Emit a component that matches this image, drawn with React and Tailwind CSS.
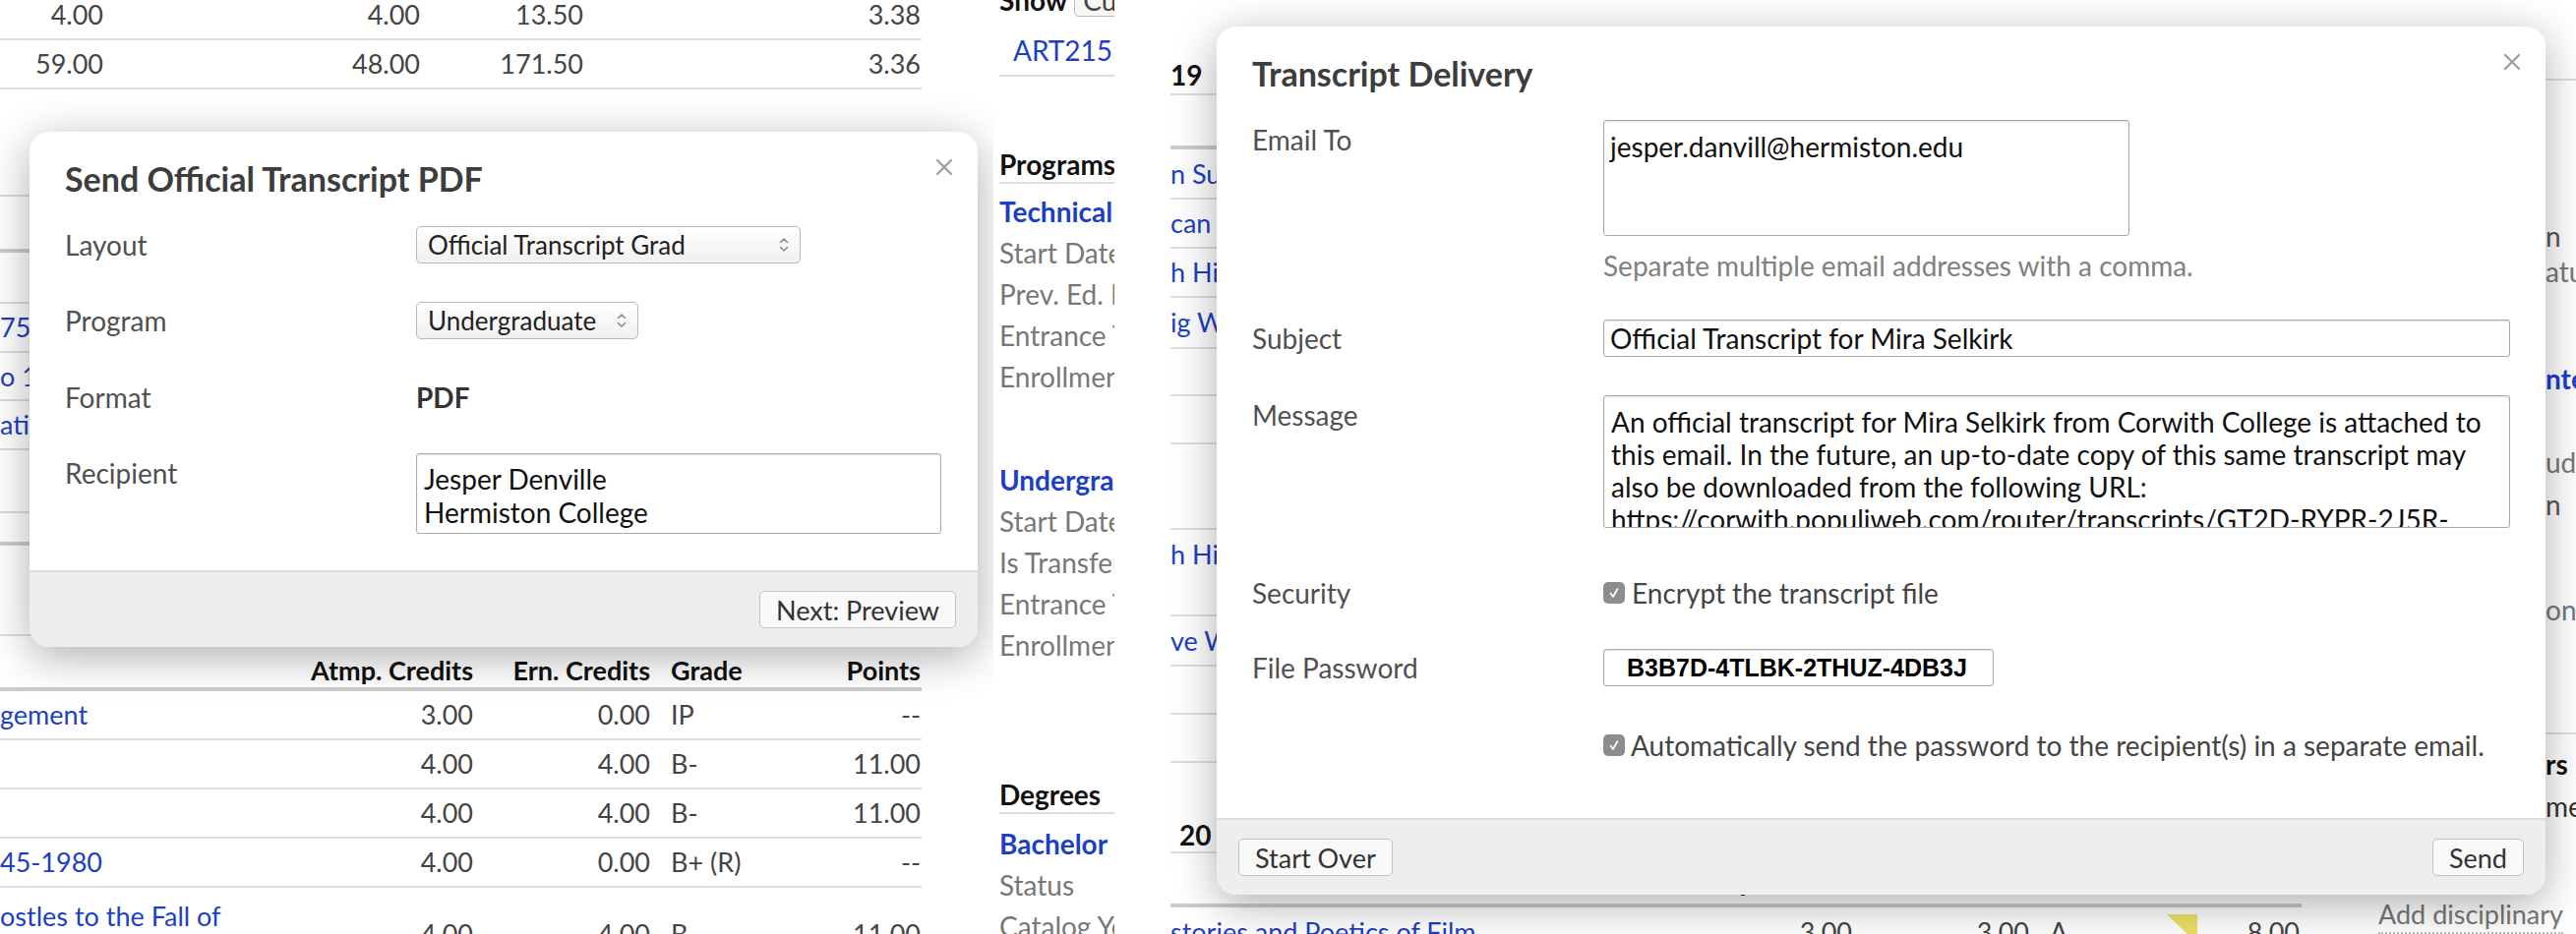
import React from "react";

const LINK = "text-[#1c3fc4]";

function Chevrons() {
  return (
    <svg width="12" height="20" viewBox="0 0 12 20" fill="none" stroke="#8a8a8a" strokeWidth="1.5" strokeLinecap="round" strokeLinejoin="round">
      <path d="M2.5 7.5 6 4l3.5 3.5" />
      <path d="M2.5 12.5 6 16l3.5-3.5" />
    </svg>
  );
}

function Check() {
  return (
    <span className="flex h-[22px] w-[22px] shrink-0 items-center justify-center rounded-[5px] bg-[#8d8d8d]">
      <svg width="14" height="14" viewBox="0 0 14 14" fill="none" stroke="white" strokeWidth="1.6" strokeLinecap="round" strokeLinejoin="round">
        <path d="M3.5 7.5 6 11 10.5 3" />
      </svg>
    </span>
  );
}

function CloseX() {
  return (
    <svg width="20" height="20" viewBox="0 0 20 20" stroke="#a0a0a0" strokeWidth="2.4" strokeLinecap="round">
      <path d="M3 3l14 14M17 3 3 17" />
    </svg>
  );
}

function Select({ value, className }) {
  return (
    <div className={`flex h-[38px] items-center justify-between rounded-[5px] border border-[#b8b8b8] bg-gradient-to-b from-white to-[#f0f0f0] pl-[11px] pr-[10px] text-[26px] text-[#222] ${className}`}>
      <span className="leading-none">{value}</span>
      <Chevrons />
    </div>
  );
}

function Button({ children }) {
  return (
    <button className="h-[38px] rounded-[5px] border border-[#c2c2c2] bg-[#f9f9f9] px-[16px] text-[27px] leading-none text-[#333]">
      {children}
    </button>
  );
}

function Row({ label, children, className = "", center = false }) {
  return (
    <div className={`flex ${center ? "items-center" : "items-start"} ${className}`}>
      <div className="w-[357px] shrink-0 text-[28px] leading-[40px] text-[#505050]">{label}</div>
      <div className="flex-1">{children}</div>
    </div>
  );
}

function Modal({ title, className, footer, children }) {
  return (
    <div className={`absolute flex flex-col overflow-hidden rounded-[20px] bg-white shadow-[0_10px_45px_rgba(0,0,0,0.32)] ${className}`}>
      <div className="relative h-[95px] shrink-0 px-[36px] pt-[29px]">
        <h2 className="text-[34px] font-bold leading-[38px] text-[#3d3d3d]">{title}</h2>
        <span className="absolute right-[24px] top-[26px]">
          <CloseX />
        </span>
      </div>
      <div className="flex-1 px-[36px]">{children}</div>
      <div className="flex h-[78px] shrink-0 items-center border-t-2 border-[#dcdcdc] bg-[#eeeeee] px-[22px]">{footer}</div>
    </div>
  );
}

const inputBox = "rounded-[3px] border border-[#aaa] bg-white shadow-[inset_0_1px_2px_rgba(0,0,0,0.12)]";
const numCell = "flex justify-end whitespace-nowrap";

function SummaryRow({ cells, className = "" }) {
  return (
    <div className={`grid h-[50px] w-[937px] grid-cols-[105px_322px_166px_343px] items-center border-b-2 border-[#ddd] text-[#444] ${className}`}>
      {cells.map((c, i) => (
        <span key={i} className={numCell}>{c}</span>
      ))}
    </div>
  );
}

function CourseRow({ name, atmp, ern, grade, points }) {
  return (
    <div className="grid h-[50px] w-[937px] grid-cols-[330px_151px_180px_139px_136px] items-center border-b-2 border-[#ddd] text-[#444]">
      <span className={`${LINK} whitespace-nowrap`}>{name}</span>
      <span className={numCell}>{atmp}</span>
      <span className={numCell}>{ern}</span>
      <span className="whitespace-nowrap pl-[21px]">{grade}</span>
      <span className={numCell}>{points}</span>
    </div>
  );
}

function LeftSection() {
  return (
    <div className="relative h-[950px] w-[1010px] shrink-0 overflow-hidden text-[27px]">
      <div className="leading-[30px]">
        <SummaryRow className="-mt-[9px]" cells={["4.00", "4.00", "13.50", "3.38"]} />
        <SummaryRow cells={["59.00", "48.00", "171.50", "3.36"]} />
        <div className="h-[109px] w-[937px] border-b-2 border-[#ddd]" />
        <div className="h-[57px] w-[937px] border-b-4 border-[#ccc]" />
        <div className="h-[52px] w-[937px] border-b-2 border-[#ddd]" />
        <div className={`flex h-[50px] w-[937px] items-center border-b-2 border-[#ddd] ${LINK}`}>75: Intro</div>
        <div className={`flex h-[49px] w-[937px] items-center border-b-2 border-[#ddd] ${LINK}`}>o 1900</div>
        <div className={`flex h-[50px] w-[937px] items-center border-b-2 border-[#ddd] ${LINK}`}>ation</div>
        <div className="h-[64px] w-[937px] border-b-2 border-[#ddd]" />
        <div className="h-[33px] w-[937px] border-b-4 border-[#ccc]" />
        <div className="h-[92px] w-[937px] border-b-2 border-[#ddd]" />
        <div className="grid h-[56px] w-[937px] grid-cols-[330px_151px_180px_139px_136px] items-end border-b-4 border-[#ccc] pb-[2px] font-bold text-[#111]">
          <span />
          <span className={numCell}>Atmp. Credits</span>
          <span className={numCell}>Ern. Credits</span>
          <span className="pl-[21px]">Grade</span>
          <span className={numCell}>Points</span>
        </div>
        <CourseRow name="gement" atmp="3.00" ern="0.00" grade="IP" points="--" />
        <CourseRow name="" atmp="4.00" ern="4.00" grade="B-" points="11.00" />
        <CourseRow name="" atmp="4.00" ern="4.00" grade="B-" points="11.00" />
        <CourseRow name="45-1980" atmp="4.00" ern="0.00" grade="B+ (R)" points="--" />
        <div className="grid w-[937px] grid-cols-[330px_151px_180px_139px_136px] pt-[12px] text-[#444]">
          <span className={`${LINK} whitespace-nowrap leading-[34px]`}>ostles to the Fall of<br />Rome</span>
          <span className={`${numCell} pt-[20px]`}>4.00</span>
          <span className={`${numCell} pt-[20px]`}>4.00</span>
          <span className="pl-[21px] pt-[20px]">B</span>
          <span className={`${numCell} pt-[20px]`}>11.00</span>
        </div>
      </div>

      <Modal
        title="Send Official Transcript PDF"
        className="left-[30px] top-[134px] h-[524px] w-[964px]"
        footer={
          <div className="flex w-full justify-end">
            <Button>Next: Preview</Button>
          </div>
        }
      >
        <div className="flex flex-col text-[28px]">
          <Row label="Layout" center>
            <Select value="Official Transcript Grad" className="w-[391px]" />
          </Row>
          <Row label="Program" center className="mt-[37px]">
            <Select value="Undergraduate" className="w-[226px]" />
          </Row>
          <Row label="Format" center className="mt-[38px]">
            <div className="flex h-[38px] items-center font-bold text-[#333]">PDF</div>
          </Row>
          <Row label="Recipient" className="mt-[37px]">
            <div className={`h-[82px] w-[534px] pl-[7px] pt-[8px] leading-[34px] text-[#111] ${inputBox}`}>
              <div>Jesper Denville</div>
              <div>Hermiston College</div>
            </div>
          </Row>
        </div>
      </Modal>
    </div>
  );
}

function MidSection() {
  return (
    <div className="h-[950px] w-[123px] shrink-0 overflow-hidden pl-[6px]">
      <div className="w-[117px] whitespace-nowrap">
        <div className="-mt-[20px] flex h-[40px] items-center gap-[7px]">
          <span className="font-bold text-[#111]">Show</span>
          <span className="flex h-[34px] items-center rounded-[5px] border border-[#bbb] bg-[#f6f6f6] px-[8px] text-[#444]">Current</span>
        </div>
        <div className={`flex h-[58px] items-center border-b-2 border-[#ddd] pl-[14px] pt-[6px] ${LINK}`}>ART215: Studio</div>
        <div className="mt-[71px] flex h-[38px] items-center border-b-2 border-[#ddd] font-bold text-[#111]">Programs</div>
        <div className={`mt-[7px] flex h-[42px] items-center font-bold ${LINK}`}>Technical Arts</div>
        <div className="flex h-[42px] items-center text-[#777]">Start Date</div>
        <div className="flex h-[42px] items-center text-[#777]">Prev. Ed. Level</div>
        <div className="flex h-[42px] items-center text-[#777]">Entrance Term</div>
        <div className="flex h-[42px] items-center text-[#777]">Enrollment</div>
        <div className={`mt-[63px] flex h-[42px] items-center font-bold ${LINK}`}>Undergraduate</div>
        <div className="flex h-[42px] items-center text-[#777]">Start Date</div>
        <div className="flex h-[42px] items-center text-[#777]">Is Transfer</div>
        <div className="flex h-[42px] items-center text-[#777]">Entrance Term</div>
        <div className="flex h-[42px] items-center text-[#777]">Enrollment</div>
        <div className="mt-[113px] flex h-[38px] items-center border-b-2 border-[#ddd] font-bold text-[#111]">Degrees</div>
        <div className={`mt-[9px] flex h-[42px] items-center font-bold ${LINK}`}>Bachelor of Arts</div>
        <div className="flex h-[42px] items-center text-[#777]">Status</div>
        <div className="flex h-[42px] items-center text-[#777]">Catalog Year</div>
      </div>
    </div>
  );
}

function TermRow({ text, h = "h-[50px]" }) {
  return (
    <div className={`flex ${h} items-center border-b-2 border-[#ddd] ${LINK}`}>{text}</div>
  );
}

function RightSection() {
  return (
    <div className="relative h-[950px] flex-1 overflow-hidden">
      <div className="flex h-full items-start">
        <div className="w-[57px] shrink-0" />
        {/* course table behind the modal */}
        <div className="w-[1150px] shrink-0 overflow-hidden whitespace-nowrap text-[27px]">
          <div className="flex h-[97px] items-end border-b-2 border-[#ddd] pb-[4px] text-[28px] font-bold leading-[30px] text-[#111]">19</div>
          <div className="h-[55px] border-b-4 border-[#ccc]" />
          <TermRow text="n Summer Session" h="h-[51px]" />
          <TermRow text="can Literature" />
          <TermRow text="h History" />
          <TermRow text="ig Workshop" h="h-[52px]" />
          <TermRow text="" h="h-[48px]" />
          <TermRow text="" h="h-[49px]" />
          <TermRow text="" h="h-[87px]" />
          <div className={`h-[88px] border-b-2 border-[#ddd] pt-[8px] leading-[34px] ${LINK}`}>h History II</div>
          <TermRow text="ve Writing" h="h-[51px]" />
          <TermRow text="" h="h-[49px]" />
          <TermRow text="" h="h-[49px]" />
          <div className="flex h-[92px] items-end border-b-2 border-[#ddd] pb-[2px] pl-[9px] text-[28px] font-bold leading-[30px] text-[#111]">20</div>
          <div className="grid h-[55px] grid-cols-[542px_151px_180px_139px_136px] items-end border-b-4 border-[#ccc] pb-[7px] font-bold leading-[30px] text-[#111]">
            <span />
            <span className={numCell}>Atmp. Credits</span>
            <span className={numCell}>Ern. Credits</span>
            <span className="pl-[21px]">Grade</span>
            <span className={numCell}>Points</span>
          </div>
          <div className="grid grid-cols-[542px_151px_180px_139px_136px] pt-[8px] leading-[34px] text-[#444]">
            <span className={LINK}>stories and Poetics of Film</span>
            <span className={numCell}>3.00</span>
            <span className={numCell}>3.00</span>
            <span className="pl-[21px]">A</span>
            <span className={`relative ${numCell}`}>
              <svg className="absolute left-[1px] top-[-1px]" width="31" height="30" viewBox="0 0 31 30">
                <path d="M0 0h31v30z" fill="#efdf66" />
              </svg>
              8.00
            </span>
          </div>
        </div>
        <div className="w-[78px] shrink-0" />
        {/* side panel */}
        <div className="w-[201px] shrink-0 whitespace-nowrap leading-[36px]">
          <div className="h-[82px] border-b-2 border-[#ddd]" />
          <div className="h-[140px]" />
          <div className="h-[36px] pl-[170px] text-[#555]">n</div>
          <div className="h-[36px] pl-[170px] text-[#777]">atus</div>
          <div className="h-[73px]" />
          <div className={`h-[36px] pl-[170px] font-bold ${LINK}`}>nter</div>
          <div className="h-[49px]" />
          <div className="h-[36px] pl-[170px] text-[#777]">udent</div>
          <div className="h-[7px]" />
          <div className="h-[36px] pl-[170px] text-[#555]">n</div>
          <div className="h-[71px]" />
          <div className="h-[36px] pl-[170px] text-[#777]">on</div>
          <div className="h-[109px] border-b-2 border-[#ddd]" />
          <div className="h-[12px]" />
          <div className="h-[36px] pl-[170px] font-bold text-[#111]">rs</div>
          <div className="h-[7px]" />
          <div className="h-[36px] pl-[170px] text-[#333]">me</div>
          <div className="h-[74px]" />
          <div className="w-fit border-b-2 border-dotted border-[#bbb] text-[27px] text-[#777]">Add disciplinary</div>
        </div>
      </div>

      <Modal
        title="Transcript Delivery"
        className="left-[104px] top-[27px] h-[883px] w-[1351px]"
        footer={
          <div className="flex w-full justify-between">
            <Button>Start Over</Button>
            <Button>Send</Button>
          </div>
        }
      >
        <div className="flex flex-col">
          <Row label="Email To">
            <div className={`h-[118px] w-[535px] pl-[6px] pt-[9px] leading-[34px] text-[#111] ${inputBox}`}>
              jesper.danvill@hermiston.edu
            </div>
            <div className="mt-[10px] leading-[40px] text-[#808080]">Separate multiple email addresses with a comma.</div>
          </Row>
          <Row label="Subject" center className="mt-[34px]">
            <div className={`flex h-[38px] w-[922px] items-center pl-[6px] text-[#111] ${inputBox}`}>
              Official Transcript for Mira Selkirk
            </div>
          </Row>
          <Row label="Message" className="mt-[38px]">
            <div className={`h-[135px] w-[922px] overflow-hidden whitespace-nowrap pl-[7px] pt-[10px] leading-[33px] text-[#111] ${inputBox}`}>
              <div>An official transcript for Mira Selkirk from Corwith College is attached to</div>
              <div>this email. In the future, an up-to-date copy of this same transcript may</div>
              <div>also be downloaded from the following URL:</div>
              <div>https://corwith.populiweb.com/router/transcripts/GT2D-RYPR-2J5R-</div>
            </div>
          </Row>
          <Row label="Security" center className="mt-[46px]">
            <div className="flex h-[38px] items-center gap-[7px] text-[#444]">
              <Check />
              <span>Encrypt the transcript file</span>
            </div>
          </Row>
          <Row label="File Password" center className="mt-[36px]">
            <div className={`flex h-[38px] w-[397px] items-center pl-[23px] font-['Liberation_Sans',Arial,sans-serif] text-[25px] font-bold text-black ${inputBox}`}>
              B3B7D-4TLBK-2THUZ-4DB3J
            </div>
          </Row>
          <Row label="" center className="mt-[40px]">
            <div className="flex h-[38px] items-center gap-[6px] text-[#444]">
              <Check />
              <span>Automatically send the password to the recipient(s) in a separate email.</span>
            </div>
          </Row>
        </div>
      </Modal>
    </div>
  );
}

export default function App() {
  return (
    <div className="flex h-[950px] w-[2619px] overflow-hidden bg-white font-[Lato,sans-serif] text-[28px] leading-[30px]">
      <LeftSection />
      <MidSection />
      <RightSection />
    </div>
  );
}
